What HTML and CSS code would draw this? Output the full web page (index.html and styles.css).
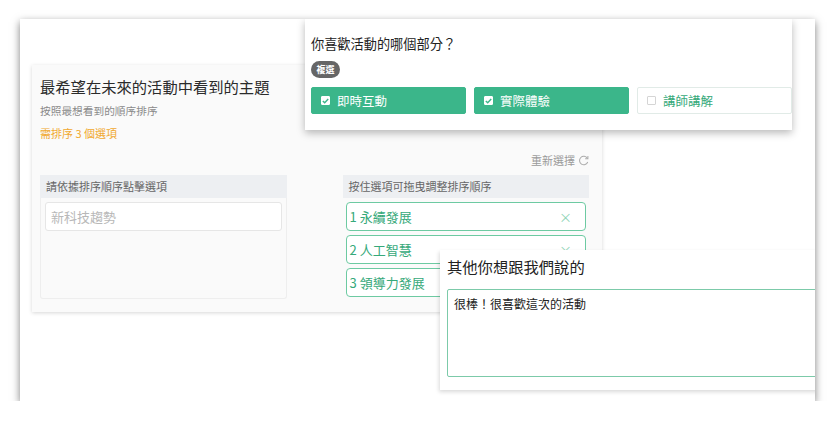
FILE: index.html
```html
<!DOCTYPE html>
<html lang="zh-Hant">
<head>
  <meta charset="UTF-8">
  <title>活動問卷</title>
  <link rel="stylesheet" href="styles.css">
</head>
<body>
  <div class="frame">

    <div class="card rank">
      <h2>最希望在未來的活動中看到的主題</h2>
      <p class="hint">按照最想看到的順序排序</p>
      <p class="need">需排序 3 個選項</p>
      <div class="reset">重新選擇
        <svg width="11" height="11" viewBox="0 0 12 12"><path d="M10.2 3.6A4.6 4.6 0 1 0 10.6 7.6" fill="none" stroke="#aaa" stroke-width="1.1"/><path d="M10.8 1.2V4.2H7.8" fill="none" stroke="#aaa" stroke-width="1.1"/></svg>
      </div>
      <div class="cols">
        <div class="box">
          <div class="box-head">請依據排序順序點擊選項</div>
          <div class="box-body">
            <div class="opt">新科技趨勢</div>
          </div>
        </div>
        <div class="box">
          <div class="box-head">按住選項可拖曳調整排序順序</div>
          <div class="box-body picked">
            <div class="opt on"><span>1 永續發展</span><span class="x">×</span></div>
            <div class="opt on"><span>2 人工智慧</span><span class="x">×</span></div>
            <div class="opt on"><span>3 領導力發展</span><span class="x">×</span></div>
          </div>
        </div>
      </div>
    </div>

    <div class="card multi">
      <h3>你喜歡活動的哪個部分？</h3>
      <span class="badge">複選</span>
      <div class="choices">
        <div class="choice checked"><i class="cb"><svg width="7" height="6" viewBox="0 0 7 6"><path d="M0.8 3L2.7 4.8L6.2 1" fill="none" stroke="#3bb68a" stroke-width="1.4"/></svg></i>即時互動</div>
        <div class="choice checked"><i class="cb"><svg width="7" height="6" viewBox="0 0 7 6"><path d="M0.8 3L2.7 4.8L6.2 1" fill="none" stroke="#3bb68a" stroke-width="1.4"/></svg></i>實際體驗</div>
        <div class="choice"><i class="cb"></i>講師講解</div>
      </div>
    </div>

    <div class="card other">
      <h3>其他你想跟我們說的</h3>
      <div class="textarea">很棒！很喜歡這次的活動</div>
    </div>

  </div>
</body>
</html>
```

FILE: styles.css
```css
* {
  box-sizing: border-box;
}
body {
  margin: 0;
  background: #fff;
  font-family: "Noto Sans CJK TC", "Noto Sans", sans-serif;
  color: #333;
}
.frame {
  position: relative;
  margin: 19px 0 0 20px;
  width: 795px;
  height: 382px;
  background: #fff;
  overflow: hidden;
  box-shadow: 0 3px 8px rgba(0,0,0,0.5);
}
.card {
  position: absolute;
}
h2, h3, p {
  margin: 0;
  font-weight: normal;
}

/* ranking question */
.rank {
  left: 12px;
  top: 46px;
  width: 570px;
  height: 247px;
  background: #fafafa;
  padding: 10px 13px 0 8px;
  box-shadow: 0 1px 4px rgba(0,0,0,0.16);
}
.rank h2 {
  font-size: 15.3px;
  line-height: 22px;
  color: #2b2b2b;
}
.hint {
  margin-top: 6px;
  font-size: 10.7px;
  line-height: 16px;
  color: #8a8a8a;
}
.need {
  margin-top: 6px;
  font-size: 11px;
  line-height: 16px;
  color: #f1a930;
}
.reset {
  margin-top: 12px;
  display: flex;
  justify-content: flex-end;
  align-items: center;
  gap: 3px;
  font-size: 11px;
  line-height: 14px;
  color: #9a9a9a;
}
.cols {
  margin-top: 8px;
  display: flex;
  gap: 56px;
}
.box {
  width: 247px;
}
.box-head {
  height: 23px;
  line-height: 23px;
  padding-left: 6px;
  background: #edeff2;
  font-size: 11px;
  color: #666;
}
.box-body {
  height: 101px;
  padding: 4px 4px;
  border: 1px solid #eeeeee;
  border-top: none;
  border-radius: 0 0 3px 3px;
}
.box-body.picked {
  border: none;
  padding: 4px 3px;
  display: flex;
  flex-direction: column;
  gap: 4px;
}
.opt {
  height: 29px;
  line-height: 27px;
  padding: 0 5px;
  background: #fff;
  border: 1px solid #e6e6e6;
  border-radius: 3px;
  font-size: 13px;
  color: #b8b8b8;
}
.opt.on {
  display: flex;
  justify-content: space-between;
  align-items: center;
  padding: 0 3px;
  border: 1.5px solid #6dcaa2;
  border-radius: 4px;
  color: #36a97a;
}
.opt .x {
  color: #8ed4b6;
  font-size: 13px;
  line-height: 11px;
  margin-right: 10px;
}

/* multiple choice */
.multi {
  left: 285px;
  top: 0;
  width: 487px;
  height: 111px;
  background: #fff;
  padding: 15px 0 0 6px;
  box-shadow: 0 3px 8px rgba(0,0,0,0.28);
}
.multi h3 {
  font-size: 13.2px;
  line-height: 20px;
  color: #222;
}
.badge {
  display: inline-block;
  margin-top: 5px;
  width: 29px;
  height: 17px;
  line-height: 17px;
  border-radius: 9px;
  background: #666;
  color: #fff;
  font-size: 9px;
  font-weight: bold;
  text-align: center;
}
.choices {
  margin-top: 9px;
  display: flex;
  gap: 8px;
}
.choice {
  width: 155px;
  height: 27px;
  display: flex;
  align-items: center;
  padding-left: 9px;
  border-radius: 2px;
  border: 1px solid #e1ebe7;
  font-size: 12.5px;
  color: #36a97a;
}
.choice.checked {
  background: #3bb68a;
  border-color: #3bb68a;
  color: #fff;
}
.cb {
  width: 9px;
  height: 9px;
  margin-right: 7px;
  border: 1px solid #d5d5d5;
  border-radius: 1px;
  display: flex;
  align-items: center;
  justify-content: center;
}
.checked .cb {
  background: #fff;
  border-color: #fff;
}

/* open question */
.other {
  left: 420px;
  top: 231px;
  width: 390px;
  height: 140px;
  background: #fff;
  padding: 6px 0 0 7px;
  box-shadow: -1px 2px 4px rgba(0,0,0,0.15);
}
.other h3 {
  font-size: 15.3px;
  line-height: 20px;
  color: #222;
}
.textarea {
  margin-top: 13px;
  width: 400px;
  height: 88px;
  padding: 5px 6px;
  border: 1px solid #7ccaa9;
  border-radius: 2px;
  font-size: 12px;
  line-height: 18px;
  color: #222;
}
```
